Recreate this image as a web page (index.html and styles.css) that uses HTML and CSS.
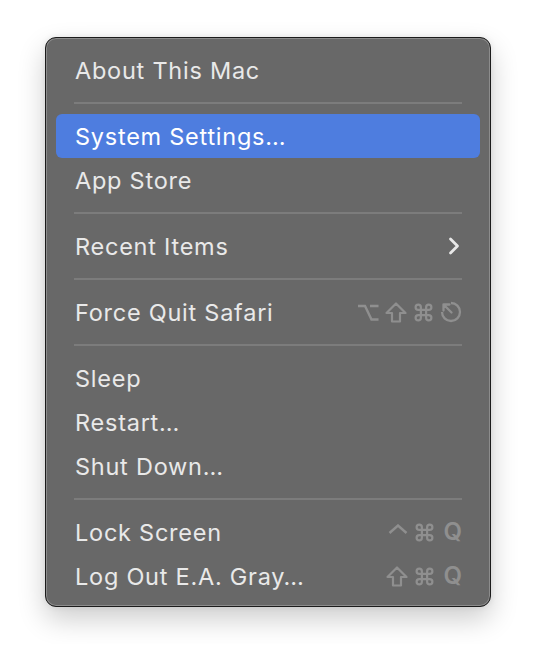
FILE: index.html
```html
<!DOCTYPE html>
<html>
<head>
<meta charset="utf-8">
<link rel="stylesheet" href="styles.css">
</head>
<body>
<div class="menu">
  <div class="item"><span class="label">About This Mac</span></div>
  <div class="sep"></div>
  <div class="item active"><span class="label">System Settings…</span></div>
  <div class="item"><span class="label">App Store</span></div>
  <div class="sep"></div>
  <div class="item"><span class="label">Recent Items</span>
    <svg class="chev" width="12" height="18" viewBox="0 0 12 18"><path d="M2.5 2 L9.5 9 L2.5 16" fill="none" stroke="#e8e8e8" stroke-width="2.8" stroke-linecap="round" stroke-linejoin="round"/></svg>
  </div>
  <div class="sep"></div>
  <div class="item"><span class="label">Force Quit Safari</span>
    <span class="keys">
      <svg class="k" width="22" height="19" viewBox="0 0 22 19"><path d="M1 3 H8 L14.5 16.5 H21.5 M13 3 H21.5" fill="none" stroke="currentColor" stroke-width="2.4"/></svg>
      <svg class="k" width="22" height="21" viewBox="0 0 22 21"><path d="M11 1.5 L20.5 11 H15 V19.5 H7 V11 H1.5 Z" fill="none" stroke="currentColor" stroke-width="2.2" stroke-linejoin="round"/></svg>
      <svg class="k" width="21" height="21" viewBox="0 0 24 24"><path d="M15 6v12a3 3 0 1 0 3-3H6a3 3 0 1 0 3 3V6a3 3 0 1 0-3 3h12a3 3 0 1 0-3-3" fill="none" stroke="currentColor" stroke-width="2.5"/></svg>
      <svg class="k" width="22" height="22" viewBox="0 0 22 22"><path d="M11 2 A9 9 0 1 1 2 11" fill="none" stroke="currentColor" stroke-width="2.3"/><path d="M3.5 3.5 L11.5 11.5 M3.5 9.5 V3.5 H9.5" fill="none" stroke="currentColor" stroke-width="2.3" stroke-linecap="round" stroke-linejoin="round"/></svg>
    </span>
  </div>
  <div class="sep"></div>
  <div class="item"><span class="label">Sleep</span></div>
  <div class="item"><span class="label">Restart…</span></div>
  <div class="item"><span class="label">Shut Down…</span></div>
  <div class="sep"></div>
  <div class="item"><span class="label">Lock Screen</span>
    <span class="keys">
      <svg class="k caret" width="20" height="10" viewBox="0 0 20 10"><path d="M1.5 9 L10 1.5 L18.5 9" fill="none" stroke="currentColor" stroke-width="2.4"/></svg>
      <svg class="k" width="21" height="21" viewBox="0 0 24 24"><path d="M15 6v12a3 3 0 1 0 3-3H6a3 3 0 1 0 3 3V6a3 3 0 1 0-3 3h12a3 3 0 1 0-3-3" fill="none" stroke="currentColor" stroke-width="2.5"/></svg>
      <span class="q">Q</span>
    </span>
  </div>
  <div class="item"><span class="label">Log Out E.A. Gray…</span>
    <span class="keys">
      <svg class="k" width="22" height="21" viewBox="0 0 22 21"><path d="M11 1.5 L20.5 11 H15 V19.5 H7 V11 H1.5 Z" fill="none" stroke="currentColor" stroke-width="2.2" stroke-linejoin="round"/></svg>
      <svg class="k" width="21" height="21" viewBox="0 0 24 24"><path d="M15 6v12a3 3 0 1 0 3-3H6a3 3 0 1 0 3 3V6a3 3 0 1 0-3 3h12a3 3 0 1 0-3-3" fill="none" stroke="currentColor" stroke-width="2.5"/></svg>
      <span class="q">Q</span>
    </span>
  </div>
</div>
</body>
</html>
```

FILE: styles.css
```css
html, body {
  margin: 0;
  background: #ffffff;
}
body {
  padding: 37px 45px;
  font-family: Inter, "Noto Sans", "DejaVu Sans", sans-serif;
}
.menu {
  box-sizing: border-box;
  width: 446px;
  padding: 10px 0 8px;
  background: #686868;
  border: 1px solid #1c1c1c;
  border-radius: 11px;
  box-shadow: inset 0 0 0 1px #8c8c8c, 0 12px 28px rgba(0, 0, 0, 0.2), 0 0 6px rgba(0, 0, 0, 0.08);
}
.item {
  height: 44px;
  margin: 0 10px;
  padding: 0 19px;
  display: flex;
  align-items: center;
  justify-content: space-between;
  border-radius: 6px;
  color: #e9e9e9;
  font-size: 23.5px;
  letter-spacing: 0.75px;
}
.item.active {
  background: #4e7ddf;
  color: #ffffff;
}
.sep {
  height: 22px;
  margin: 0 28px;
  display: flex;
  align-items: center;
}
.sep::before {
  content: "";
  display: block;
  width: 100%;
  height: 2px;
  background: #7c7c7c;
}
.chev {
  margin-right: 1px;
}
.keys {
  display: flex;
  align-items: center;
  gap: 6px;
  color: #8f8f8f;
  margin-right: -1px;
}
.k {
  display: block;
}
.caret {
  margin-bottom: 6px;
}
.q {
  font-size: 24px;
  font-weight: 600;
  margin-left: 2px;
  line-height: 1;
  letter-spacing: 0;
}
```
